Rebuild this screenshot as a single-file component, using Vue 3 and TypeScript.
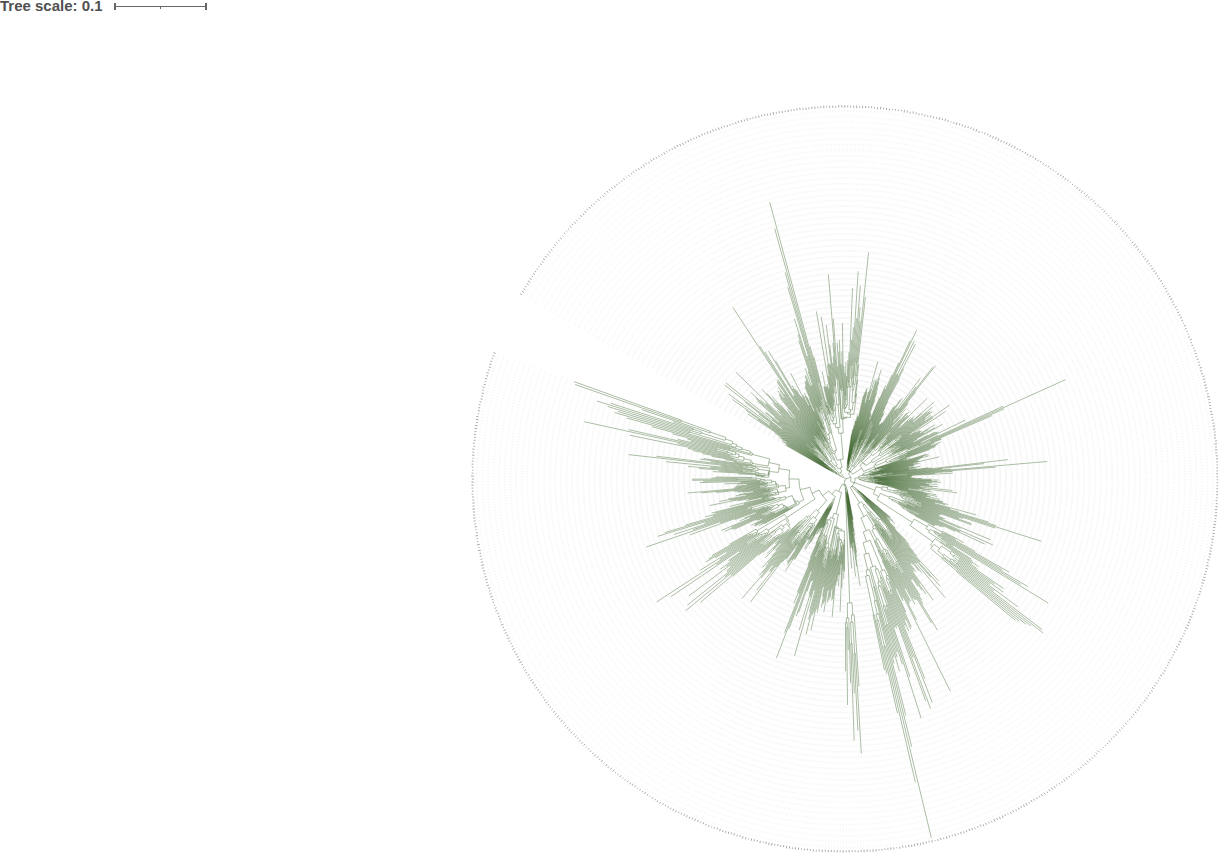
<script setup lang="ts">
// Circular phylogram. Lengths inside the tree group are in tenths of a pixel,
// angles are in degrees, counter-clockwise from east.
type Point = [number, number]

interface Clade {
  from: number
  to: number
  base: number
  side: 'first' | 'last' | 'mid'
  reach: number
  body: Point[]
  spikes: Point[]
}
interface Join { r: number; parts: Part[] }
type Part = Clade | Join
interface Node { r: number; angle: number; kids: Node[] }

const OUTER = 373
const START = 150.3
const STEP = 0.46

let seed = 20117
function rand(): number {
  seed = (seed * 16807) % 2147483647
  return seed / 2147483647
}

function clade(from: number, to: number, base: number, side: Clade['side'], reach: number, body: Point[], spikes: Point[] = []): Clade {
  return { from, to, base, side, reach, body, spikes }
}
function join(r: number, ...parts: Part[]): Join {
  return { r, parts }
}

const layout: Join = join(1,
  join(3,
    clade(150.3, 142, 5, 'mid', 0.2, [[150, 78], [146, 128], [142, 150]], [[144, 144], [145, 138], [141.2, 153]]),
    join(8,
      clade(142, 132, 14, 'mid', 0.35, [[142, 140], [137, 138], [132, 120]], [[141, 153], [135.5, 153], [137.3, 128]]),
      join(12,
        clade(132, 116, 16, 'mid', 0.35, [[132, 116], [124, 130], [116, 114]], [[123, 205], [122.6, 158], [122.1, 150], [120.7, 149], [120.2, 137], [117, 119]]),
        join(20,
          clade(116, 104, 28, 'last', 0.6, [[116, 95], [110, 124], [108, 145], [104, 155]], [[108.3, 146], [107.8, 152], [107.3, 168], [106.8, 200], [106.3, 215], [105.8, 260], [105.3, 287]]),
          join(46,
            clade(104, 94, 52, 'first', 0.6, [[104, 80], [101, 135], [97, 158], [94, 155]], [[99.8, 170], [98.4, 164], [97, 155], [94.8, 205], [94.2, 161]]),
            clade(94, 82, 60, 'last', 0.7, [[94, 155], [90, 150], [87, 172], [84, 180], [82, 100]], [[91, 156], [87.9, 191], [86.4, 208], [85.4, 194], [84.2, 228], [83.7, 183]]),
          ),
        ),
      ),
    ),
  ),
  join(6,
    join(9,
      clade(82, 76, 10, 'mid', 0.2, [[82, 64], [76, 100]]),
      clade(76, 68, 12, 'mid', 0.45, [[76, 114], [71, 120], [68, 80]], [[74.4, 122], [71.7, 115]]),
      clade(68, 57, 15, 'mid', 0.45, [[68, 78], [65, 152], [62, 150], [60.5, 90], [57, 86]], [[64.9, 153], [64.2, 165], [63.4, 154], [62.6, 152]]),
      clade(57, 47, 15, 'mid', 0.45, [[57, 92], [52, 132], [47, 108]], [[53.4, 126], [52, 142], [51.5, 145]]),
      join(20,
        clade(47, 29, 24, 'mid', 0.5, [[47, 112], [40, 120], [29, 118]], [[44.6, 115], [41, 118], [35.4, 128], [34, 121], [29.4, 112]]),
        clade(29, 19, 32, 'mid', 0.65, [[29, 114], [24, 132], [19, 110]], [[26, 134], [24.8, 174], [24.3, 242], [23.8, 174], [23.3, 160]]),
      ),
    ),
    join(10,
      join(14,
        clade(19, 9, 18, 'mid', 0.3, [[19, 92], [13, 98], [9, 86]], [[13.3, 97]]),
        clade(9, 2.5, 22, 'mid', 0.5, [[9, 90], [6, 145], [4, 135], [2.5, 85]], [[7, 164], [6.5, 140], [5.1, 203], [4.6, 151], [3.3, 108]]),
        clade(2.5, -9, 16, 'mid', 0.3, [[2.5, 88], [-4, 104], [-9, 100]], [[-0.5, 94], [-6, 108], [-7.1, 113]]),
      ),
      join(32,
        clade(-9, -20, 38, 'last', 0.5, [[-9, 100], [-13, 126], [-20, 144]], [[-15.4, 136], [-16.6, 150], [-17.3, 158], [-17.8, 206], [-18.2, 158]]),
        join(38,
          clade(-20, -28, 48, 'last', 0.6, [[-20, 144], [-24, 150], [-28, 130]], [[-22.6, 158], [-24, 162], [-24.8, 154]]),
          join(80,
            clade(-28, -33, 95, 'last', 0.7, [[-28, 155], [-30, 200], [-33, 205]], [[-30.3, 212], [-31, 205], [-31.6, 238]]),
            clade(-33, -40, 108, 'last', 0.6, [[-33, 195], [-37, 220], [-40, 226]], [[-36.5, 215], [-37.4, 248], [-37.9, 251], [-38.4, 237], [-38.9, 232], [-39.4, 225]]),
          ),
        ),
      ),
      join(10,
        clade(-40, -48, 11, 'mid', 0.25, [[-40, 66], [-44, 90], [-48, 140]], [[-47.5, 138]]),
        join(28,
          clade(-48, -57, 32, 'mid', 0.5, [[-48, 142], [-53, 150], [-57, 150]], [[-48.5, 143], [-50, 155], [-54, 150]]),
          join(42,
            clade(-57, -64, 55, 'mid', 0.6, [[-57, 150], [-60, 168], [-64, 172]], [[-58.4, 177], [-59, 168], [-63.5, 200], [-64, 237]]),
            clade(-64, -78.6, 56, 'last', 0.7, [[-64, 175], [-70, 210], [-74, 215], [-78.6, 230]], [[-68.2, 215], [-68.8, 240], [-69.4, 245], [-70, 236], [-72.4, 251], [-75.5, 244], [-76, 276], [-76.4, 369], [-77, 311], [-77.5, 240]]),
          ),
        ),
      ),
    ),
  ),
  join(6,
    clade(-78.6, -86, 9, 'mid', 0.2, [[-78.6, 50], [-82, 96], [-86, 96]], [[-82, 108], [-84, 98]]),
    clade(-86, -90, 124, 'mid', 0.5, [[-86, 245], [-90, 225]], [[-86.6, 275], [-87.1, 252], [-88, 262], [-89.2, 226]]),
    join(14,
      clade(-90, -115, 36, 'first', 0.55, [[-90, 94], [-92, 128], [-98, 130], [-106, 156], [-112, 160], [-115, 75]], [[-92.2, 133], [-95.4, 139], [-99, 135], [-102.7, 155], [-104, 160], [-106, 184], [-107, 158], [-110.3, 160], [-111, 192], [-111.5, 165]]),
      join(20,
        clade(-115, -122, 23, 'mid', 0.25, [[-115, 78], [-118, 90], [-122, 96]]),
        join(28,
          clade(-122, -137, 42, 'mid', 0.5, [[-122, 110], [-130, 140], [-137, 130]], [[-123, 110], [-127.4, 155], [-130.6, 158], [-128.5, 142]]),
          join(36,
            clade(-137, -151, 70, 'last', 0.55, [[-137, 130], [-140, 180], [-146, 198], [-151, 145]], [[-139.5, 190], [-140.3, 207], [-141.5, 202], [-143, 195], [-145.8, 210], [-146.8, 225], [-149, 162]]),
            join(46,
              clade(-151, -167, 52, 'last', 0.5, [[-151, 112], [-157, 142], [-162, 172], [-167, 130]], [[-160, 165], [-161.1, 210], [-162, 180], [-162.8, 196], [-163.4, 188], [-164, 166]]),
              join(56,
                clade(-167, -181, 60, 'last', 0.5, [[-167, 105], [-170, 140], [-176, 152], [-181, 158]], [[-169, 138], [-175, 158], [-179.6, 153], [-180.2, 153]]),
                join(67,
                  clade(-181, -188.5, 76, 'last', 0.6, [[-181, 105], [-185, 175], [-188.5, 185]], [[-185.5, 180], [-186.3, 218], [-187, 190]]),
                  join(78,
                    clade(-188.5, -194, 94, 'last', 0.65, [[-188.5, 150], [-191, 215], [-194, 220]], [[-191.5, 220], [-192.5, 267], [-193, 222]]),
                    clade(-194, -200.2, 96, 'last', 0.8, [[-194, 215], [-197, 250], [-200.2, 270]], [[-196, 240], [-196.8, 248], [-197.5, 260], [-198.1, 246], [-199.4, 286], [-199.9, 288]]),
                  ),
                ),
              ),
            ),
          ),
        ),
      ),
    ),
  ),
)

function lookup(points: Point[], angle: number): number {
  for (let i = 1; i < points.length; i++) {
    const [a0, r0] = points[i - 1]
    const [a1, r1] = points[i]
    if (angle >= a1) return r0 + ((r1 - r0) * Math.max(0, Math.min(1, (a0 - angle) / (a0 - a1))))
  }
  return points[points.length - 1][1]
}

const leaves: Node[] = []

function grow(tips: Node[], r: number, c: Clade): Node {
  if (tips.length === 1) return tips[0]
  const n = tips.length
  let cut = 1 + Math.floor(rand() * (n - 1))
  if (c.side !== 'mid' && rand() < 0.7) {
    const peel = Math.min(n - 1, 1 + Math.floor(rand() * rand() * Math.min(9, n)))
    cut = c.side === 'last' ? peel : n - peel
  }
  const kids = [tips.slice(0, cut), tips.slice(cut)].map((part) => {
    const room = Math.min(...part.map((t) => t.r)) - r
    const step = c.reach * (0.2 + rand()) * (1 - part.length / n) + 0.01
    return grow(part, r + Math.max(0, room) * Math.min(0.85, step), c)
  })
  return { r, angle: (kids[0].angle + kids[1].angle) / 2, kids }
}

function build(part: Part): Node {
  if ('parts' in part) {
    const kids = part.parts.map(build)
    return { r: part.r, angle: (kids[0].angle + kids[kids.length - 1].angle) / 2, kids }
  }
  const tips: Node[] = []
  const first = Math.ceil((START - part.from) / STEP - 0.001)
  // Neighbouring leaves share a length factor, so that they form tufts.
  let left = 0
  let tuft = 1
  for (let i = first; START - i * STEP > part.to; i++) {
    if (left-- <= 0) {
      left = 1 + Math.floor(rand() * 5)
      tuft = 1 - 0.26 * rand()
    }
    const angle = START - i * STEP
    const size = lookup(part.body, angle) * tuft * (1 - 0.24 * rand() * rand())
    tips.push({ r: Math.max(size, part.base + 8), angle, kids: [] })
  }
  for (const [angle, r] of part.spikes) {
    const near = tips.reduce((a, b) => (Math.abs(a.angle - angle) < Math.abs(b.angle - angle) ? a : b))
    near.r = r
  }
  leaves.push(...tips)
  return grow(tips, part.base, part)
}

function at(r: number, angle: number): string {
  const t = (angle * Math.PI) / 180
  return `${Math.round(r * 10 * Math.cos(t))} ${Math.round(-r * 10 * Math.sin(t))}`
}

const branches: string[] = []
function trace(node: Node): void {
  for (const kid of node.kids) {
    const sweep = kid.angle < node.angle ? 1 : 0
    const size = Math.round(node.r * 10)
    branches.push(`M${at(node.r, node.angle)}A${size} ${size} 0 0 ${sweep} ${at(node.r, kid.angle)}L${at(kid.r, kid.angle)}`)
    trace(kid)
  }
}
trace(build(layout))

const guides = leaves.map((leaf) => `M${at(OUTER - 4, leaf.angle)}L${at(leaf.r, leaf.angle)}`)
const labels = leaves.map((leaf) => `M${at(OUTER - 1 - rand(), leaf.angle)}L${at(OUTER + rand(), leaf.angle)}`)
</script>

<template>
  <main class="page">
    <svg class="figure" viewBox="0 0 1218 853" role="img" aria-label="Circular phylogenetic tree">
      <g class="scale">
        <text x="0" y="11">Tree scale: 0.1</text>
        <path class="rule" d="M115 6H206V7H115Z" />
        <path class="rule" d="M114 3H116V10H114ZM205 3H207V10H205ZM160 7H161V9H160Z" />
      </g>
      <g transform="translate(845 479) scale(0.1)">
        <path v-for="(d, i) in branches" :key="'b' + i" class="branch" :d="d" />
        <path v-for="(d, i) in guides" :key="'g' + i" class="guide" :d="d" />
        <path v-for="(d, i) in labels" :key="'l' + i" class="label" :d="d" />
      </g>
    </svg>
  </main>
</template>

<style>
body {
  margin: 0;
  background: #fff;
}
</style>

<style scoped>
.page {
  width: 100%;
}
.figure {
  display: block;
  width: 100%;
  height: auto;
}
.scale text {
  font: bold 15px "Liberation Sans", Arial, sans-serif;
  fill: #505050;
}
.rule {
  fill: #666;
}
.branch {
  fill: none;
  stroke: #2c5519;
  stroke-width: 4px;
}
.guide {
  fill: none;
  stroke: #e8e8e8;
  stroke-width: 5px;
  stroke-dasharray: 18 38;
}
.label {
  fill: none;
  stroke: #a0a0a0;
  stroke-width: 9px;
}
</style>
